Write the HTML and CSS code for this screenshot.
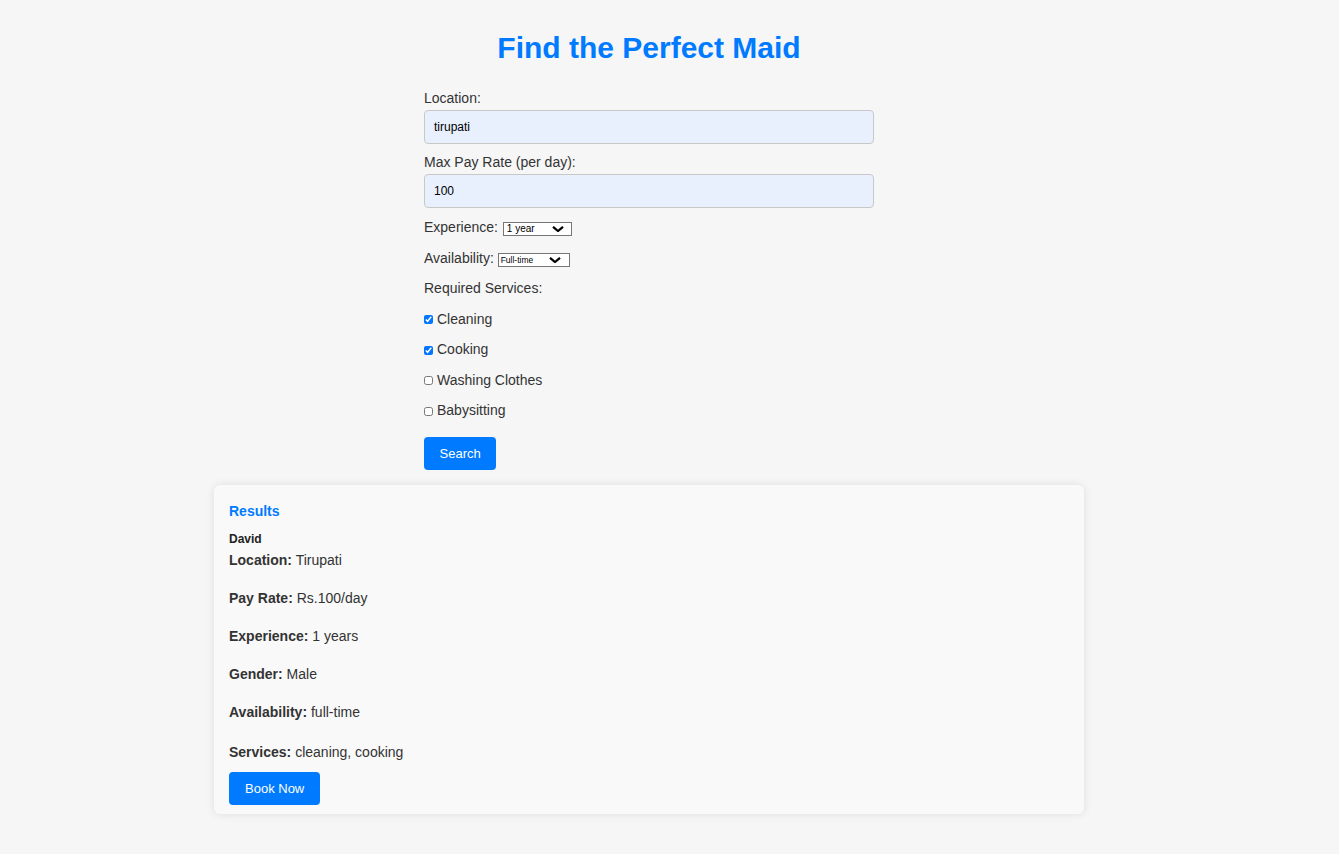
FILE: index.html
```html
<!DOCTYPE html>
<html lang="en">
<head>
<meta charset="utf-8">
<title>Find the Perfect Maid</title>
<link rel="stylesheet" href="styles.css">
</head>
<body>
<div class="page">
  <h1 class="title">Find the Perfect Maid</h1>
  <form class="search-form">
    <label class="field-label" for="location">Location:</label>
    <input class="text-input" id="location" type="text" value="tirupati">
    <label class="field-label" for="pay">Max Pay Rate (per day):</label>
    <input class="text-input" id="pay" type="text" value="100">
    <div class="row">Experience: <span class="select-wrap exp"><select class="mini-select"><option>1 year</option><option>2 years</option><option>3+ years</option></select><svg class="chev" viewBox="0 0 12 6" width="12" height="6"><path d="M1 0.8 L6 5 L11 0.8" fill="none" stroke="#000" stroke-width="2.2"/></svg></span></div>
    <div class="row">Availability: <span class="select-wrap avail"><select class="mini-select small"><option>Full-time</option><option>Part-time</option></select><svg class="chev" viewBox="0 0 12 6" width="12" height="6"><path d="M1 0.8 L6 5 L11 0.8" fill="none" stroke="#000" stroke-width="2.2"/></svg></span></div>
    <div class="row">Required Services:</div>
    <div class="row"><label class="check"><input type="checkbox" checked>Cleaning</label></div>
    <div class="row"><label class="check"><input type="checkbox" checked>Cooking</label></div>
    <div class="row"><label class="check"><input type="checkbox">Washing Clothes</label></div>
    <div class="row"><label class="check"><input type="checkbox">Babysitting</label></div>
    <button class="btn search-btn" type="button">Search</button>
  </form>
  <section class="results">
    <h3 class="results-title">Results</h3>
    <h4 class="maid-name">David</h4>
    <div class="detail"><strong>Location:</strong> Tirupati</div>
    <div class="detail"><strong>Pay Rate:</strong> Rs.100/day</div>
    <div class="detail"><strong>Experience:</strong> 1 years</div>
    <div class="detail"><strong>Gender:</strong> Male</div>
    <div class="detail detail-gap"><strong>Availability:</strong> full-time</div>
    <div class="detail detail-last"><strong>Services:</strong> cleaning, cooking</div>
    <button class="btn book-btn" type="button">Book Now</button>
  </section>
</div>
</body>
</html>
```

FILE: styles.css
```css
html, body {
  margin: 0;
  padding: 0;
  background: #f6f6f6;
}
body {
  font-family: "Liberation Sans", Arial, sans-serif;
  font-size: 14px;
  color: #333;
}
.page {
  width: 1298px;
  display: flex;
  flex-direction: column;
  align-items: center;
  padding-bottom: 40px;
}
.title {
  margin: 30px 0 25px;
  font-size: 30px;
  line-height: 35px;
  font-weight: bold;
  color: #007bff;
  text-align: center;
}
.search-form {
  width: 450px;
  display: flex;
  flex-direction: column;
  align-items: flex-start;
}
.field-label {
  display: block;
  line-height: 16px;
  margin-bottom: 4px;
}
.text-input {
  box-sizing: border-box;
  width: 450px;
  height: 34px;
  margin: 0 0 10px;
  padding: 0 9px;
  border: 1px solid #c8c8c8;
  border-radius: 4px;
  background: #e8f0fe;
  font-family: "Liberation Sans", Arial, sans-serif;
  font-size: 12px;
  color: #000;
  outline: none;
}
.row {
  line-height: 19px;
  height: 19px;
  margin-bottom: 11.5px;
  white-space: nowrap;
}
.select-wrap {
  position: relative;
  display: inline-block;
  vertical-align: baseline;
  font-size: 10px;
  line-height: 12px;
}
.select-wrap.exp { width: 69px; margin-left: 1px; }
.select-wrap.avail { width: 72px; }
.mini-select {
  -webkit-appearance: none;
  appearance: none;
  display: inline-block;
  vertical-align: baseline;
  box-sizing: border-box;
  width: 100%;
  height: 14px;
  margin: 0;
  padding: 0 3px;
  border: 1px solid #767676;
  border-radius: 0;
  background: #fff;
  font-family: "Liberation Sans", Arial, sans-serif;
  font-size: 10px;
  line-height: 12px;
  color: #000;
}
.mini-select.small {
  font-size: 8.5px;
  padding: 0 2px;
}
.chev {
  position: absolute;
  right: 8px;
  top: 4px;
  pointer-events: none;
}
.avail .chev {
  right: 9px;
}
.check {
  display: inline-flex;
  align-items: center;
}
.check input {
  width: 9px;
  height: 9px;
  margin: 1px 4px 0 0;
  accent-color: #0075ff;
}
.btn {
  box-sizing: border-box;
  height: 33px;
  padding: 0 15px;
  border: none;
  border-radius: 4px;
  background: #007bff;
  color: #fff;
  font-family: "Liberation Sans", Arial, sans-serif;
  font-size: 13px;
  font-weight: 500;
  cursor: pointer;
}
.search-btn {
  margin-top: 5.5px;
  padding: 0 15.5px;
}
.results {
  box-sizing: border-box;
  width: 870px;
  margin-top: 15px;
  padding: 18px 15px 9px;
  background: #f9f9f9;
  border-radius: 6px;
  box-shadow: 0 0 8px rgba(0, 0, 0, 0.1);
}
.results-title {
  margin: 0 0 13px;
  font-size: 14px;
  line-height: 16px;
  color: #007bff;
}
.maid-name {
  margin: 0 0 2px;
  font-size: 12px;
  line-height: 14px;
  color: #222;
}
.detail {
  line-height: 24px;
  margin-bottom: 14px;
}
.detail-gap {
  margin-bottom: 15.5px;
}
.detail-last {
  margin-bottom: 8px;
}
.book-btn {
  display: block;
  padding: 0 16px;
}
```
